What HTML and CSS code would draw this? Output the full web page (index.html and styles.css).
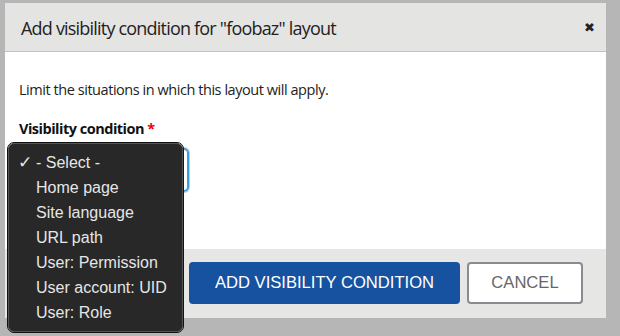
FILE: index.html
```html
<!DOCTYPE html>
<html lang="en">
<head>
  <meta charset="UTF-8">
  <title>Add visibility condition</title>
  <link rel="stylesheet" href="styles.css">
</head>
<body>
  <div class="overlay">
    <div class="dialog">
      <div class="dialog-title">
        <span class="title-text">Add visibility condition for "foobaz" layout</span>
        <span class="close">&#x2716;</span>
      </div>

      <div class="dialog-body">
        <p class="description">Limit the situations in which this layout will apply.</p>
        <div class="label">Visibility condition <span class="required">*</span></div>
        <div class="select-box"></div>
      </div>

      <div class="dialog-buttons">
        <button class="button primary">ADD VISIBILITY CONDITION</button>
        <button class="button">CANCEL</button>
      </div>
    </div>
  </div>

  <!-- native select popup, open -->
  <div class="popup">
    <div class="option checked"><span class="check">&#x2713;</span>- Select -</div>
    <div class="option">Home page</div>
    <div class="option">Site language</div>
    <div class="option">URL path</div>
    <div class="option">User: Permission</div>
    <div class="option">User account: UID</div>
    <div class="option">User: Role</div>
  </div>
</body>
</html>
```

FILE: styles.css
```css
html, body {
  margin: 0;
  padding: 0;
  height: 100%;
  overflow: hidden;
  font-family: "Open Sans", sans-serif;
  background-color: #b6b6b6;
}

.overlay {
  padding: 3px 14px 0 5px;
}

.dialog {
  width: 601px;
  background-color: white;
}

.dialog-title {
  height: 48px;
  display: flex;
  align-items: center;
  justify-content: space-between;
  padding: 0 11px 0 16px;
  background-color: #e4e4e2;
  border-bottom: 1px solid #c2c2c2;
}

.title-text {
  font-size: 18px;
  color: #222;
  letter-spacing: -0.8px;
  padding-top: 2px;
}

.close {
  font-size: 13px;
  font-weight: bold;
  color: #222;
  font-family: "DejaVu Sans", sans-serif;
}

.dialog-body {
  padding: 28px 14px 0 14px;
  height: 169px;
}

.description {
  margin: 0;
  font-size: 14.5px;
  letter-spacing: -0.45px;
  color: #222;
}

.label {
  margin-top: 20px;
  font-size: 14.5px;
  letter-spacing: -0.5px;
  font-weight: bold;
  color: #111;
}

.required {
  color: #e00;
}

.select-box {
  margin-top: 10px;
  width: 166px;
  height: 40px;
  border: 2px solid #3d9be0;
  border-radius: 5px;
  box-shadow: 0 0 0 1px #c8c8c8;
}

.dialog-buttons {
  height: 69px;
  display: flex;
  justify-content: flex-end;
  align-items: flex-start;
  gap: 7px;
  padding: 13px 23px 0 0;
  box-sizing: border-box;
  background-color: #e6e6e5;
}

.button {
  height: 42px;
  padding: 0;
  border-radius: 4px;
  font-family: "Liberation Sans", Arial, sans-serif;
  font-size: 16.6px;
  cursor: pointer;
}

.primary {
  width: 271px;
  border: none;
  background-color: #1752a0;
  color: white;
}

.button:not(.primary) {
  width: 116px;
  border: 2px solid #8a8a90;
  background-color: white;
  color: #666;
}

.popup {
  position: absolute;
  left: 8px;
  top: 143px;
  width: 173px;
  padding: 6px 0;
  background-color: #282828;
  border: 1px solid #555;
  outline: 1px solid #111;
  border-radius: 6px;
  font-family: "Liberation Sans", Arial, sans-serif;
  font-size: 16px;
  color: #e6e6e6;
}

.option {
  height: 25px;
  line-height: 25px;
  padding-left: 27px;
  position: relative;
}

.check {
  position: absolute;
  left: 9px;
  font-family: "DejaVu Sans", sans-serif;
  font-size: 17px;
}
```
